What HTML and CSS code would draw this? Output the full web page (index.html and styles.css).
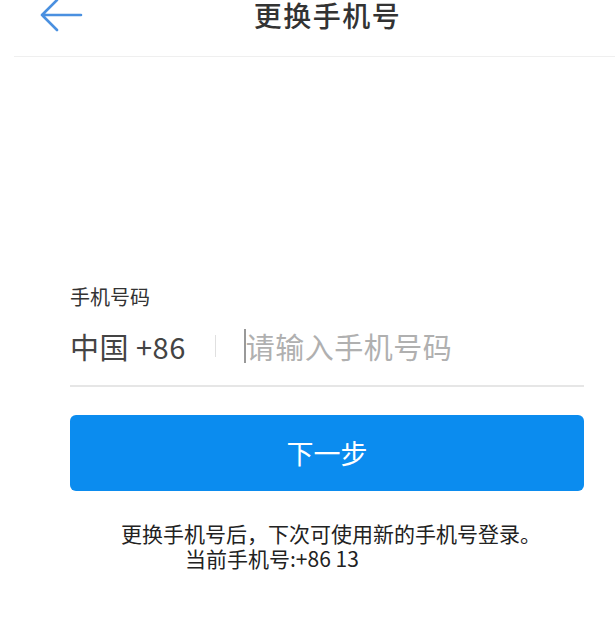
FILE: index.html
```html
<!DOCTYPE html>
<html>
<head>
	<title>更换手机号</title>
	<meta charset="utf-8">
	<link rel="stylesheet" href="styles.css">
</head>
<body>

	<div class="header">
		<a class="back">
			<svg width="44" height="34" viewBox="0 0 44 34">
				<path d="M18 2 L3 17 L18 32 M3 17 L42 17" fill="none" stroke="#4a90e0" stroke-width="2.6" stroke-linecap="round" stroke-linejoin="round"/>
			</svg>
		</a>
		<h1 class="title">更换手机号</h1>
	</div>

	<div class="form">
		<p class="label">手机号码</p>

		<div class="phone-row">
			<span class="area">中国 +86</span>
			<span class="sep"></span>
			<span class="cursor"></span>
			<span class="placeholder">请输入手机号码</span>
		</div>

		<div class="btn">下一步</div>

		<div class="note">
			<p>更换手机号后，下次可使用新的手机号登录。</p>
			<p class="in-3">当前手机号:+86 13</p>
		</div>
	</div>

</body>
</html>
```

FILE: styles.css
```css
* {
	font-family: "Noto Sans CJK SC", "Noto Sans", sans-serif;
	box-sizing: border-box;
}

body {
	margin: 0;
	background: #fff;
	color: #333;
}

p {
	margin: 0;
}

.header {
	height: 57px;
	margin-left: 14px;
	border-bottom: 1px solid #efefef;
	display: flex;
	align-items: flex-start;
}

.back {
	display: block;
	margin-left: 25px;
	margin-top: -2px;
	height: 34px;
}

.title {
	flex: 1;
	margin: 0 0 0 -43px;
	text-align: center;
	font-size: 28px;
	font-weight: 500;
	line-height: 31px;
	color: #333;
	letter-spacing: 1.5px;
}

.form {
	padding: 228px 31px 0 70px;
}

.label {
	font-size: 20px;
	line-height: 24px;
	color: #333;
}

.phone-row {
	margin-top: 12px;
	height: 66px;
	padding-bottom: 14px;
	border-bottom: 2px solid #e6e6e6;
	display: flex;
	align-items: center;
}

.area {
	font-size: 29px;
	color: #444;
	letter-spacing: 0.5px;
}

.sep {
	width: 1px;
	height: 22px;
	background: #e0e0e0;
	margin: 0 28px 0 29px;
}

.cursor {
	width: 2px;
	height: 34px;
	background: #999;
}

.placeholder {
	font-size: 29px;
	color: #b0b0b0;
	letter-spacing: 0.5px;
}

.btn {
	margin-top: 28px;
	height: 76px;
	border-radius: 6px;
	background: #0b8cef;
	color: #fff;
	font-size: 27px;
	line-height: 76px;
	text-align: center;
}

.note {
	width: fit-content;
	margin: 30px auto 0 auto;
	padding-left: 8px;
	font-size: 21px;
	line-height: 25px;
	color: #222;
}

.in-3 {
	padding-left: 64px;
}
```
